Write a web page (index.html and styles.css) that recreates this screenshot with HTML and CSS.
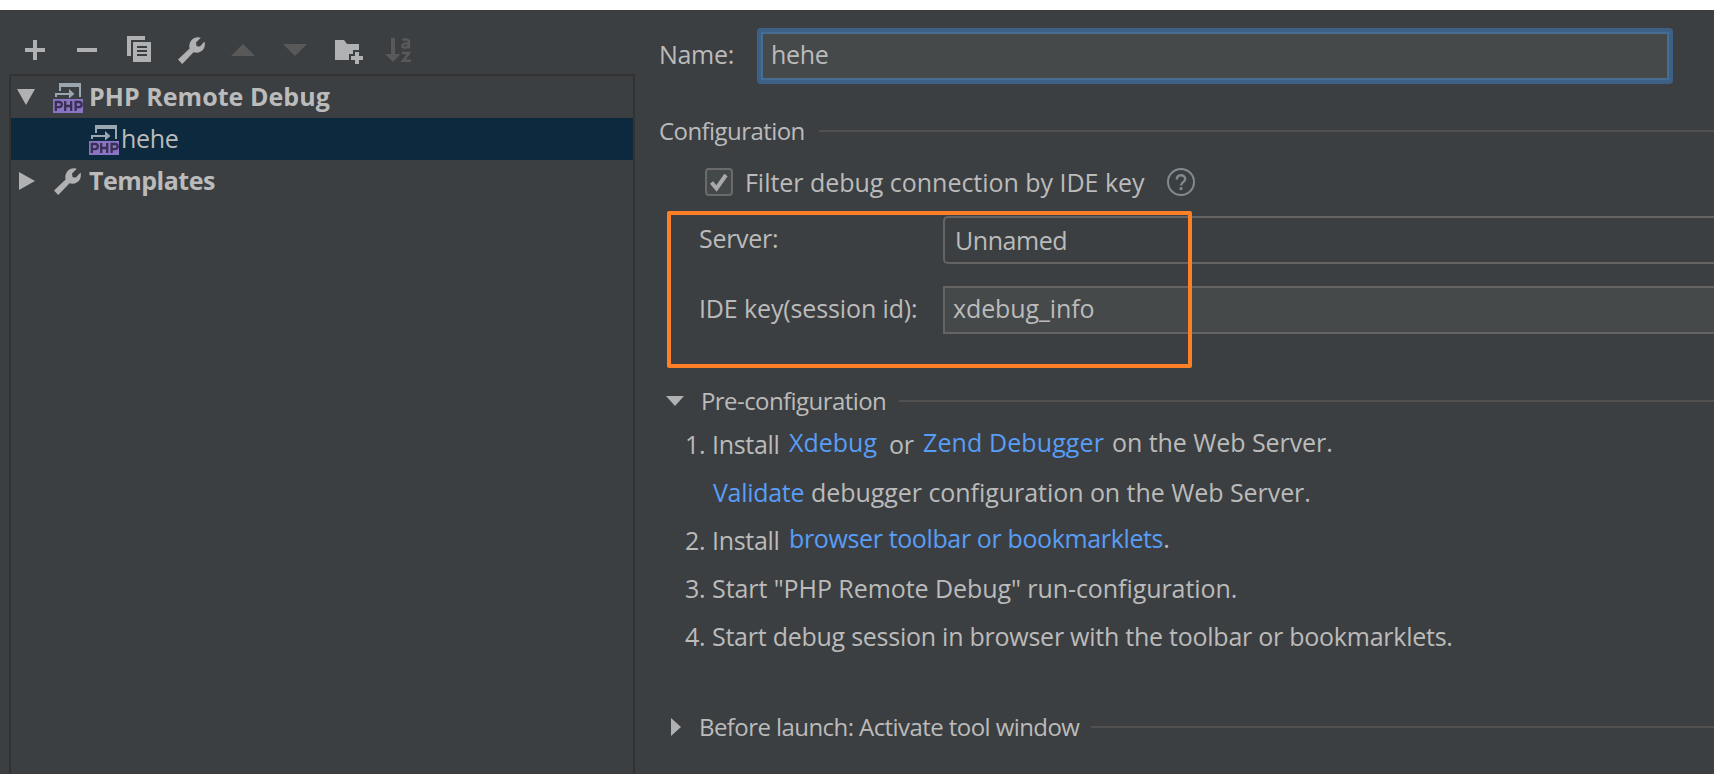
FILE: index.html
```html
<!DOCTYPE html>
<html lang="en">
<head>
<meta charset="utf-8">
<title>Run/Debug Configurations</title>
<link rel="stylesheet" href="styles.css">
</head>
<body>
<svg class="defs" aria-hidden="true">
  <symbol id="wrench" viewBox="0 0 27 27">
    <path d="M4.2 27 L0 22.600 L11.600 11.600 C10.500 7.500 12.200 3 16.200 1 C18.500 0 21 -.2 22.800 .7 L18 5.600 L18.600 9.200 L21.900 9.500 L26.500 4.500 C27.600 8.500 26.200 12.500 22.800 14.600 C20.400 16 17.800 16 15.600 15.300 Z"/>
  </symbol>
  <symbol id="php" viewBox="0 0 30 30">
    <path fill="#9aa7b0" d="M6 0h22v14h-2V4H8v4H6zM2 10h14V6l5.500 5L16 15.500V12H4v2H2z"/>
    <path fill="#8a75c4" d="M0 16h30v14H0z"/>
    <path fill="none" stroke="#3a2f55" stroke-width="2.300" d="M2.800 28V19h3.400a2.600 2.600 0 0 1 0 5.200H3M12.200 18v10M18.200 18v10M12.200 23h6M22.600 28V19h3.400a2.600 2.600 0 0 1 0 5.200H22.900"/>
  </symbol>
</svg>
<div class="dialog">
  <aside class="side">
    <div class="toolbar">
      <svg width="20" height="20" viewBox="0 0 20 20"><path d="M8 0h4v8h8v4h-8v8H8v-8H0V8h8z"/></svg>
      <svg width="20" height="20" viewBox="0 0 20 20"><path d="M0 8h20v4H0z"/></svg>
      <svg width="24" height="26" viewBox="0 0 24 26"><path d="M0 0h18v4H4v16H0z"/><path fill-rule="evenodd" d="M6 6h18v20H6zM10 10v2h10v-2zM10 14v2h10v-2zM10 18v2h10v-2z"/></svg>
      <svg width="27" height="27"><use href="#wrench"/></svg>
      <svg class="off" width="24" height="12" viewBox="0 0 24 12"><path d="M0 12L12 0l12 12z"/></svg>
      <svg class="off" width="24" height="12" viewBox="0 0 24 12"><path d="M0 0h24L12 12z"/></svg>
      <svg class="folder" width="28" height="24" viewBox="0 0 28 24"><path d="M0 0h9l3 4h12v6h-6v4h-4v6H0zM20 12h4v4h4v4h-4v4h-4v-4h-4v-4h4z"/></svg>
      <svg class="off" width="26" height="24" viewBox="0 0 26 24"><path d="M6 0h4v16h5.500L8 24 0 16h6z"/><path fill="none" stroke="#595959" stroke-width="2.500" d="M17.500 2.200c2-1.300 6.400-1.300 6.400 1.500V10.500M23.900 5.200c-8-.3-7.800 4.500-4.200 4.500 2.400 0 4-1.400 4.200-3M17 15h7.200L18 22.800h8"/></svg>
    </div>
    <div class="tree">
      <div class="node bold"><svg class="arrow" width="18" height="18" viewBox="0 0 18 18"><path d="M0 1h18L9 17z"/></svg><svg class="php" width="30" height="30"><use href="#php"/></svg><span class="t-root">PHP Remote Debug</span></div>
      <div class="node child selected"><svg class="php" width="30" height="30"><use href="#php"/></svg><span>hehe</span></div>
      <div class="node bold"><svg class="arrow" width="18" height="18" viewBox="0 0 18 18"><path d="M2 0l16 9L2 18z"/></svg><svg class="wr" width="27" height="27"><use href="#wrench"/></svg><span class="t-tpl">Templates</span></div>
    </div>
  </aside>
  <main class="form">
    <div class="name-row"><label class="t-name">Name:</label><div class="name-field"><span>hehe</span></div></div>
    <div class="title config"><span>Configuration</span><hr></div>
    <div class="check-row">
      <svg width="28" height="28" viewBox="0 0 28 28"><rect x="1" y="1" width="26" height="26" rx="3" fill="#43494a" stroke="#6b6b6b" stroke-width="2"/><path d="M6.500 14.500l5 6L21 7" fill="none" stroke="#a9a9a9" stroke-width="4"/></svg>
      <span class="t-filter">Filter debug connection by IDE key</span>
      <svg class="help" width="28" height="28" viewBox="0 0 28 28"><circle cx="14" cy="14" r="13" fill="none" stroke="#7f8b91" stroke-width="2"/><path d="M9.800 11.500c0-5.500 8.400-5.500 8.400-.5 0 3-4.200 3.200-4.200 6.500" fill="none" stroke="#7f8b91" stroke-width="2.400"/><path fill="#7f8b91" d="M12.600 19.200h2.800V22h-2.800z"/></svg>
    </div>
    <div class="fields">
      <div class="field-row server"><label>Server:</label><div class="combo"><span>Unnamed</span></div></div>
      <div class="field-row key"><label class="t-key">IDE key(session id):</label><div class="input"><span>xdebug_info</span></div></div>
      <div class="highlight"></div>
    </div>
    <div class="title pre"><svg width="18" height="10" viewBox="0 0 18 10"><path d="M0 0h18L9 10z"/></svg><span>Pre-configuration</span><hr></div>
    <div class="steps">
      <div class="step"><span class="num">1.</span><span class="ins">Install</span><span class="up link t-xd">Xdebug</span><span class="or">or</span><span class="up link t-zend">Zend Debugger</span><span class="up t-on">on the Web Server.</span></div>
      <div class="step"><span class="num"></span><span class="link t-val">Validate</span><span class="t-dbg">debugger configuration on the Web Server.</span></div>
      <div class="step"><span class="num">2.</span><span class="ins">Install</span><span class="up t-bm"><span class="link">browser toolbar or bookmarklets</span>.</span></div>
      <div class="step"><span class="num">3.</span><span class="t-3">Start "PHP Remote Debug" run-configuration.</span></div>
      <div class="step"><span class="num">4.</span><span class="t-4">Start debug session in browser with the toolbar or bookmarklets.</span></div>
    </div>
    <div class="title launch"><svg width="10" height="18" viewBox="0 0 10 18"><path d="M0 0l10 9L0 18z"/></svg><span>Before launch: Activate tool window</span><hr></div>
  </main>
</div>
</body>
</html>
```
FILE: styles.css
```css
* { box-sizing: border-box; }
body {
  margin: 0;
  padding-top: 10px;
  height: 774px;
  overflow: hidden;
  background: #fff;
  color: #bbb;
  font: 25px/30px "Open Sans", "Noto Sans", sans-serif;
  letter-spacing: -0.3px;
  white-space: nowrap;
}
.defs { position: absolute; width: 0; height: 0; }
svg { flex: none; display: block; fill: #afb1b3; }
.dialog { display: flex; height: 764px; background: #3c3f41; }
.side { display: flex; flex-direction: column; width: 626px; margin-left: 9px; flex: none; }
.toolbar { display: flex; align-items: center; height: 64px; padding: 16px 0 0 16px; }
.toolbar svg { margin-right: 32px; }
.toolbar svg:nth-child(2) { margin-right: 30px; }
.toolbar svg:nth-child(3) { margin: -2px 27px 0 0; }
.toolbar svg:nth-child(4) { margin-right: 26px; }
.toolbar svg:nth-child(5), .toolbar svg:nth-child(6) { margin-right: 28px; }
.toolbar .folder { margin: 4px 22px 0 0; }
.off { fill: #595959; }
.tree { flex: 1; border: 2px solid #323232; border-bottom: 0; }
.node { display: flex; align-items: center; height: 42px; padding-left: 6px; }
.node span { padding-bottom: 2px; }
.bold { font-weight: 700; }
.child { padding-left: 78px; }
.child span { padding-left: 2px; }
.selected { background: #0d293e; }
.arrow { margin-right: 18px; }
.arrow + .php { margin-right: 6px; }
.php { margin-top: 2px; }
.wr { margin: 1px 8px 0 1px; }
.t-root { letter-spacing: 0.05px; }
.t-tpl { letter-spacing: -0.5px; }
.form { display: flex; flex-direction: column; flex: 1; min-width: 0; padding: 18px 0 0 24px; }
.name-row { display: flex; height: 56px; }
.name-row label { width: 98px; padding-top: 11px; }
.name-field {
  width: 916px;
  border: 4px solid #3d6185;
  border-radius: 4px;
  box-shadow: inset 0 0 0 2px #466d94;
  background: #45494a;
  padding: 7px 0 0 10px;
}
.title { display: flex; align-items: center; height: 30px; font-size: 24px; letter-spacing: -0.57px; }
.title hr { flex: 1; height: 2px; margin: 0; border: 0; background: #515151; }
.config { margin-top: 32px; }
.config span { width: 160px; }
.check-row { display: flex; align-items: center; height: 30px; margin: 21px 0 0 46px; }
.t-filter { width: 422px; margin-left: 12px; letter-spacing: -0.03px; }
.fields { position: relative; margin-top: 19px; padding-left: 40px; }
.field-row { display: flex; height: 48px; }
.field-row label { width: 244px; padding-top: 7px; }
.field-row .t-key { letter-spacing: -0.13px; }
.key { margin-top: 22px; }
.combo, .input { flex: 1; border: 2px solid #646464; border-right: 0; }
.combo { border-radius: 5px 0 0 5px; padding: 7px 0 0 10px; letter-spacing: -0.45px; }
.input { background: #45494a; padding: 5px 0 0 8px; letter-spacing: -0.1px; }
.highlight {
  position: absolute;
  left: 8px;
  top: -5px;
  width: 525px;
  height: 157px;
  border: 4px solid #ff7f27;
  border-radius: 2px;
}
.pre { margin-top: 52px; padding-left: 7px; }
.pre span { width: 198px; margin-left: 17px; }
.steps { margin-top: 4px; padding-left: 26px; }
.step { display: flex; align-items: center; height: 48px; }
.num { width: 27px; }
.ins { width: 77px; }
.up { padding-bottom: 4px; }
.link { color: #589df6; }
.t-xd { width: 100px; letter-spacing: 0; }
.or { width: 34px; }
.t-zend { width: 189px; letter-spacing: 0.1px; }
.t-on { letter-spacing: -0.06px; }
.t-val { width: 98px; margin-left: 1px; }
.t-dbg { letter-spacing: -0.05px; }
.t-bm { letter-spacing: -0.37px; }
.t-3 { letter-spacing: -0.07px; }
.t-4 { letter-spacing: -0.25px; }
.launch { margin-top: 52px; padding-left: 12px; }
.launch span { width: 392px; margin-left: 18px; }
```
